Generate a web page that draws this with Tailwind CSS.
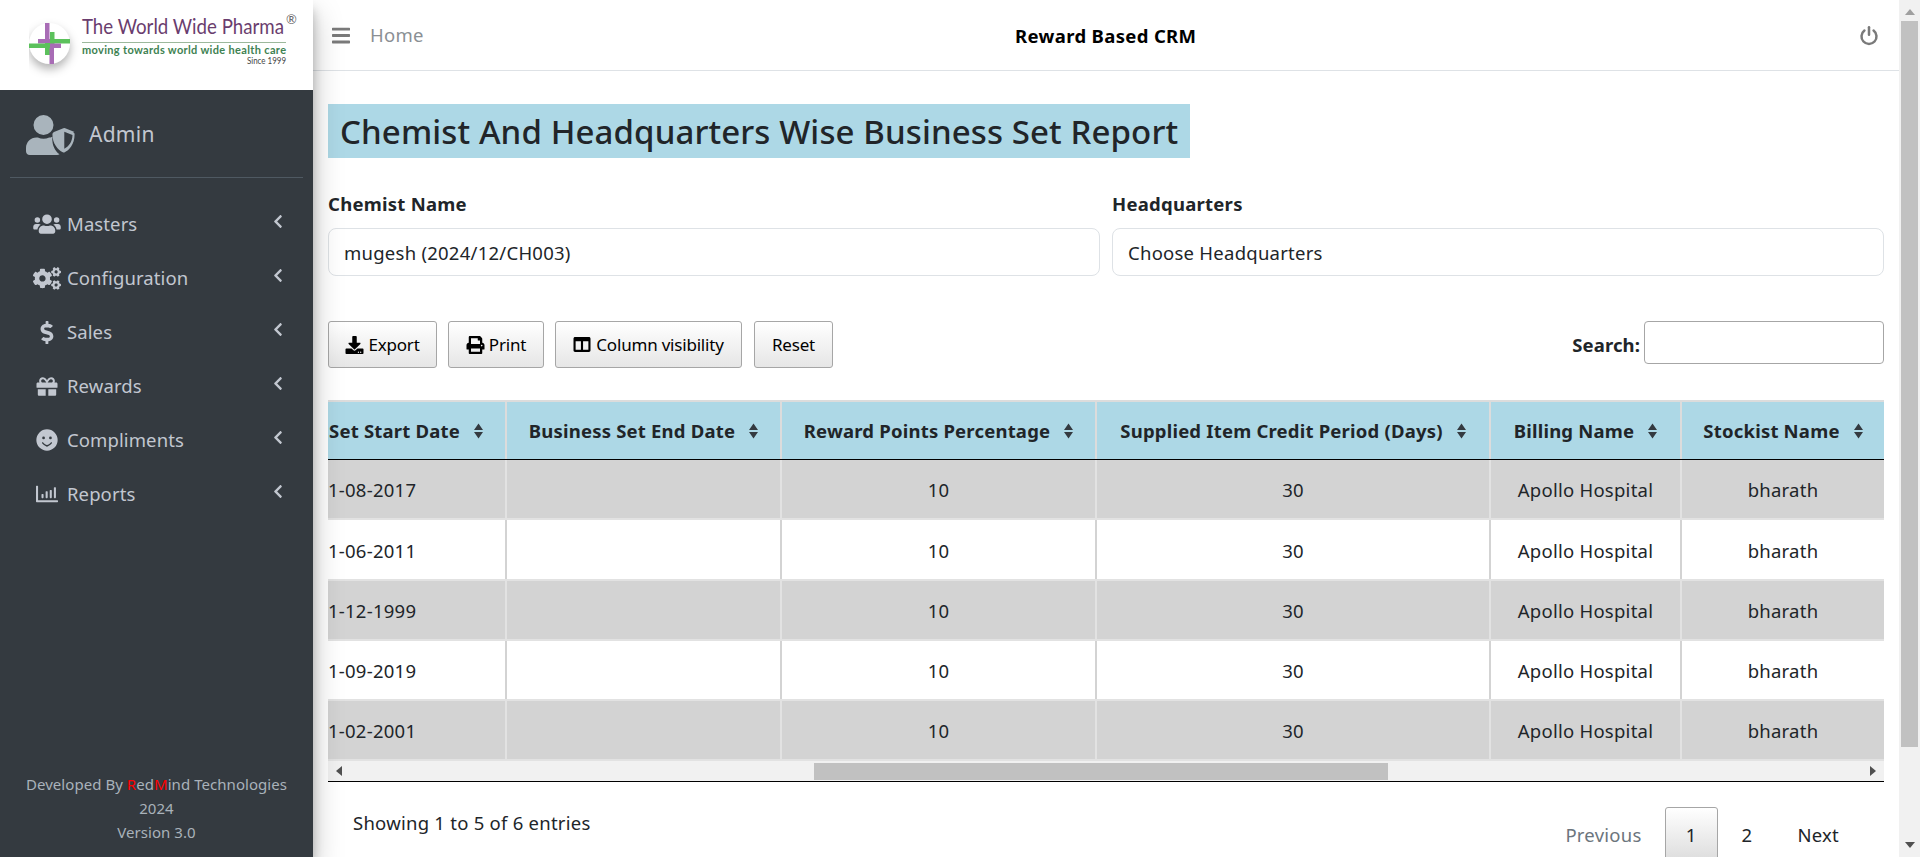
<!DOCTYPE html>
<html>
<head>
<meta charset="utf-8">
<script src="https://cdn.jsdelivr.net/npm/@tailwindcss/browser@4"></script>
</head>
<body class="m-0 overflow-hidden bg-white font-['Noto_Sans','Open_Sans',sans-serif] text-[#212529] tracking-[0.25px]">
<div class="flex h-[857px] w-[1920px] overflow-hidden">
  <aside class="relative z-10 flex h-full w-[313px] shrink-0 flex-col bg-[#343a40] shadow-[0_14px_28px_rgba(0,0,0,0.25),0_10px_10px_rgba(0,0,0,0.22)]">
    <div class="flex h-[90px] shrink-0 items-start bg-white pl-[29px] pt-[12px] tracking-normal">
      <svg width="275" height="66" viewBox="0 0 275 66">
        <circle cx="20.5" cy="31.5" r="20.5" fill="#fff" style="filter:drop-shadow(0 5px 5px rgba(0,0,0,.3))"/>
        <rect x="16" y="11" width="4.5" height="17" fill="#a86cb5"/>
        <rect x="9" y="27" width="12" height="4.5" fill="#a86cb5"/>
        <rect x="21" y="27" width="20" height="4.5" fill="#5cc15c"/>
        <rect x="21" y="20" width="4.5" height="16" fill="#5cc15c"/>
        <rect x="0" y="31.5" width="21" height="4.5" fill="#5cc15c"/>
        <rect x="16" y="31" width="5" height="12" fill="#5cc15c"/>
        <rect x="21" y="31.5" width="11" height="4.5" fill="#a86cb5"/>
        <rect x="20.5" y="36" width="4.5" height="16" fill="#a86cb5"/>
        <text x="53" y="22" font-family="Lato" font-size="22" fill="#6a3d6e" textLength="202" lengthAdjust="spacingAndGlyphs">The World Wide Pharma</text>
        <text x="257" y="12" font-family="Lato" font-size="13" fill="#666">®</text>
        <rect x="53" y="30" width="204" height="1" fill="#9cb89c"/>
        <text x="53" y="42" font-family="Lato" font-weight="700" font-size="11" fill="#3e8252" textLength="204" lengthAdjust="spacing">moving towards world wide health care</text>
        <text x="218" y="52" font-family="Lato" font-size="8.5" fill="#444" textLength="39" lengthAdjust="spacingAndGlyphs">Since 1999</text>
      </svg>
    </div>
    <div class="mx-[10px] flex h-[88px] shrink-0 items-center border-b border-[#4f5962] pl-[16px] pt-[2px]">
      <svg width="50" height="40" viewBox="0 0 640 512" class="text-[#a9b4bc]"><path fill="currentColor" d="M224 256a128 128 0 1 0 0-256 128 128 0 0 0 0 256zm90 32h-17a174 174 0 0 1-146 0h-17C60 288 0 348 0 422v42c0 27 21 48 48 48h352c11 0 20-3 29-9-62-42-93-115-93-208 0-6 0-12 1-17zM622 217l-120-48a32 32 0 0 0-24 0l-120 48a32 32 0 0 0-20 30c0 119 69 201 133 230 8 4 17 4 25 0 51-23 126-96 126-230 0-13-8-25-20-30zM490 432V215l105 42c-2 90-50 150-105 175z"/></svg>
      <span class="ml-[13px] text-[21px] text-[#c2c7d0]">Admin</span>
    </div>
    <nav class="flex flex-col pl-[32px] pr-[30px] pt-[19px] text-[18.5px] tracking-[0.1px] text-[#c2c7d0]">
      <div class="flex h-[54px] items-center"><span class="flex w-[30px] justify-center"><svg width="28" height="22" viewBox="0 0 640 512"><path fill="#c2c7d0" d="M96 224a64 64 0 1 0 0-128 64 64 0 0 0 0 128zm448 0a64 64 0 1 0 0-128 64 64 0 0 0 0 128zm32 32h-64c-18 0-34 7-45 19 40 22 69 62 75 109h66c18 0 32-14 32-32v-32c0-35-29-64-64-64zm-256 0a112 112 0 1 0 0-224 112 112 0 0 0 0 224zm77 32h-8a157 157 0 0 1-138 0h-8c-64 0-115 52-115 115v29c0 27 21 48 48 48h288c27 0 48-21 48-48v-29c0-63-52-115-115-115zm-224-13c-12-12-27-19-45-19H64c-35 0-64 29-64 64v32c0 18 14 32 32 32h66c6-47 35-87 75-109z"/></svg></span><span class="ml-[5px] flex-1">Masters</span><svg class="-mt-[5px]" width="10" height="15" viewBox="0 0 320 512"><path fill="#c2c7d0" d="M34 239L228 45c9-9 25-9 34 0l23 23c9 9 9 24 0 34L131 256l154 154c9 10 9 25 0 34l-23 23c-9 9-25 9-34 0L34 273c-9-9-9-25 0-34z"/></svg></div>
      <div class="flex h-[54px] items-center"><span class="flex w-[30px] justify-center"><svg width="28" height="23" viewBox="0 0 640 512"><path fill="#c2c7d0" d="M512.1 191l-8.2 14.3c-3 5.3-9.4 7.5-15.1 5.4-11.8-4.4-22.6-10.7-32.1-18.6-4.6-3.8-5.8-10.5-2.8-15.7l8.2-14.3c-6.9-8-12.3-17.3-15.9-27.4h-16.5c-6 0-11.2-4.3-12.2-10.3-2-12-2.1-24.6 0-37.1 1-6 6.2-10.4 12.2-10.4h16.5c3.6-10.1 9-19.4 15.9-27.4l-8.2-14.3c-3-5.2-1.9-11.9 2.8-15.7 9.5-7.9 20.4-14.2 32.1-18.6 5.7-2.1 12.1.1 15.1 5.4l8.2 14.3c10.5-1.9 21.2-1.9 31.7 0L552 6.3c3-5.3 9.4-7.5 15.1-5.4 11.8 4.4 22.6 10.7 32.1 18.6 4.6 3.8 5.8 10.5 2.8 15.7l-8.2 14.3c6.9 8 12.3 17.3 15.9 27.4h16.5c6 0 11.2 4.3 12.2 10.3 2 12 2.1 24.6 0 37.1-1 6-6.2 10.4-12.2 10.4h-16.5c-3.6 10.1-9 19.4-15.9 27.4l8.2 14.3c3 5.2 1.9 11.9-2.8 15.7-9.5 7.9-20.4 14.2-32.1 18.6-5.7 2.1-12.1-.1-15.1-5.4l-8.2-14.3c-10.4 1.9-21.2 1.9-31.7 0zm-10.5-58.8c38.5 29.6 82.4-14.3 52.8-52.8-38.5-29.7-82.4 14.3-52.8 52.8zM386.3 286.1l33.7 16.8c10.1 5.8 14.5 18.1 10.5 29.1-8.9 24.2-26.4 46.4-42.6 65.8-7.4 8.9-20.2 11.1-30.3 5.3l-29.1-16.8c-16 13.7-34.6 24.6-54.9 31.7v33.6c0 11.6-8.3 21.6-19.7 23.6-24.6 4.2-50.4 4.4-75.9 0-11.5-2-20-11.9-20-23.6V418c-20.3-7.2-38.9-18-54.9-31.7L74 403c-10 5.8-22.9 3.6-30.3-5.3-16.2-19.4-33.3-41.6-42.2-65.7-4-10.9.4-23.2 10.5-29.1l33.3-16.8c-3.9-20.9-3.9-42.4 0-63.4L12 205.8c-10.1-5.8-14.6-18.1-10.5-29 8.9-24.2 26-46.4 42.2-65.8 7.4-8.9 20.2-11.1 30.3-5.3l29.1 16.8c16-13.7 34.6-24.6 54.9-31.7V57.1c0-11.5 8.2-21.5 19.6-23.5 24.6-4.2 50.5-4.4 76-.1 11.5 2 20 11.9 20 23.6v33.6c20.3 7.2 38.9 18 54.9 31.7l29.1-16.8c10-5.8 22.9-3.6 30.3 5.3 16.2 19.4 33.2 41.6 42.1 65.8 4 10.9.1 23.2-10 29.1l-33.7 16.8c3.9 21 3.9 42.5 0 63.5zm-117.6 21.1c59.2-77-28.7-164.9-105.7-105.7-59.2 77 28.7 164.9 105.7 105.7zm243.4 182.7l-8.2 14.3c-3 5.3-9.4 7.5-15.1 5.4-11.8-4.4-22.6-10.7-32.1-18.6-4.6-3.8-5.8-10.5-2.8-15.7l8.2-14.3c-6.9-8-12.3-17.3-15.9-27.4h-16.5c-6 0-11.2-4.3-12.2-10.3-2-12-2.1-24.6 0-37.1 1-6 6.2-10.4 12.2-10.4h16.5c3.6-10.1 9-19.4 15.9-27.4l-8.2-14.3c-3-5.2-1.9-11.9 2.8-15.7 9.5-7.9 20.4-14.2 32.1-18.6 5.7-2.1 12.1.1 15.1 5.4l8.2 14.3c10.5-1.9 21.2-1.9 31.7 0l8.2-14.3c3-5.3 9.4-7.5 15.1-5.4 11.8 4.4 22.6 10.7 32.1 18.6 4.6 3.8 5.8 10.5 2.8 15.7l-8.2 14.3c6.9 8 12.3 17.3 15.9 27.4h16.5c6 0 11.2 4.3 12.2 10.3 2 12 2.1 24.6 0 37.1-1 6-6.2 10.4-12.2 10.4h-16.5c-3.6 10.1-9 19.4-15.9 27.4l8.2 14.3c3 5.2 1.9 11.9-2.8 15.7-9.5 7.9-20.4 14.2-32.1 18.6-5.7 2.1-12.1-.1-15.1-5.4l-8.2-14.3c-10.4 1.9-21.2 1.9-31.7 0zM501.6 431c38.5 29.6 82.4-14.3 52.8-52.8-38.5-29.6-82.4 14.3-52.8 52.8z"/></svg></span><span class="ml-[5px] flex-1">Configuration</span><svg class="-mt-[5px]" width="10" height="15" viewBox="0 0 320 512"><path fill="#c2c7d0" d="M34 239L228 45c9-9 25-9 34 0l23 23c9 9 9 24 0 34L131 256l154 154c9 10 9 25 0 34l-23 23c-9 9-25 9-34 0L34 273c-9-9-9-25 0-34z"/></svg></div>
      <div class="flex h-[54px] items-center"><span class="flex w-[30px] justify-center"><svg width="14" height="23" viewBox="0 0 288 512"><path fill="#c2c7d0" d="M209 233L101 202c-12-4-21-16-21-29 0-17 14-29 31-29h66c12 0 24 4 34 11 6 4 14 3 19-2l35-33c7-7 6-18-1-24-25-19-55-30-87-30V16c0-9-7-16-16-16h-32c-9 0-16 7-16 16v50h-3C47 66-4 122 1 187c4 46 39 84 83 97l102 30c12 4 21 16 21 29 0 17-14 29-31 29h-66c-12 0-24-4-34-11-6-4-14-3-19 2l-35 33c-7 7-6 18 1 24 25 19 55 30 87 30v50c0 9 7 16 16 16h32c9 0 16-7 16-16v-50c47-1 90-29 105-73 22-62-15-126-72-144z"/></svg></span><span class="ml-[5px] flex-1">Sales</span><svg class="-mt-[5px]" width="10" height="15" viewBox="0 0 320 512"><path fill="#c2c7d0" d="M34 239L228 45c9-9 25-9 34 0l23 23c9 9 9 24 0 34L131 256l154 154c9 10 9 25 0 34l-23 23c-9 9-25 9-34 0L34 273c-9-9-9-25 0-34z"/></svg></div>
      <div class="flex h-[54px] items-center"><span class="flex w-[30px] justify-center"><svg width="22" height="21" viewBox="0 0 512 512"><path fill="#c2c7d0" d="M32 448c0 18 14 32 32 32h160V320H32v128zm256 32h160c18 0 32-14 32-32V320H288v160zm192-320h-42c6-12 10-26 10-40 0-49-40-88-88-88-42 0-69 21-104 69-35-48-62-69-104-69-48 0-88 39-88 88 0 14 3 28 10 40H32c-18 0-32 14-32 32v80c0 9 7 16 16 16h480c9 0 16-7 16-16v-80c0-18-14-32-32-32zm-326 0c-22 0-40-18-40-40s18-40 40-40c20 0 35 3 87 80h-87zm204 0h-87c52-77 66-80 87-80 22 0 40 18 40 40s-18 40-40 40z"/></svg></span><span class="ml-[5px] flex-1">Rewards</span><svg class="-mt-[5px]" width="10" height="15" viewBox="0 0 320 512"><path fill="#c2c7d0" d="M34 239L228 45c9-9 25-9 34 0l23 23c9 9 9 24 0 34L131 256l154 154c9 10 9 25 0 34l-23 23c-9 9-25 9-34 0L34 273c-9-9-9-25 0-34z"/></svg></div>
      <div class="flex h-[54px] items-center"><span class="flex w-[30px] justify-center"><svg width="22" height="22" viewBox="0 0 496 512"><path fill="#c2c7d0" d="M248 8a248 248 0 1 0 0 496 248 248 0 0 0 0-496zm80 168a32 32 0 1 1 0 64 32 32 0 0 1 0-64zm-160 0a32 32 0 1 1 0 64 32 32 0 0 1 0-64zm194 154c-43 51-106 81-114 81s-71-30-114-81c-12-15 10-34 25-18 28 34 59 59 89 59s61-25 89-59c13-16 37 3 25 18z"/></svg></span><span class="ml-[5px] flex-1">Compliments</span><svg class="-mt-[5px]" width="10" height="15" viewBox="0 0 320 512"><path fill="#c2c7d0" d="M34 239L228 45c9-9 25-9 34 0l23 23c9 9 9 24 0 34L131 256l154 154c9 10 9 25 0 34l-23 23c-9 9-25 9-34 0L34 273c-9-9-9-25 0-34z"/></svg></div>
      <div class="flex h-[54px] items-center"><span class="flex w-[30px] justify-center"><svg width="22" height="22" viewBox="0 0 512 512"><path fill="#c2c7d0" d="M332 352h24c6 0 12-6 12-12V172c0-6-6-12-12-12h-24c-6 0-12 6-12 12v168c0 6 6 12 12 12zm96 0h24c6 0 12-6 12-12V108c0-6-6-12-12-12h-24c-6 0-12 6-12 12v232c0 6 6 12 12 12zm-288 0h24c6 0 12-6 12-12v-72c0-6-6-12-12-12h-24c-6 0-12 6-12 12v72c0 6 6 12 12 12zm96 0h24c6 0 12-6 12-12V204c0-6-6-12-12-12h-24c-6 0-12 6-12 12v136c0 6 6 12 12 12zm260 48H48V76c0-7-5-12-12-12H12C5 64 0 69 0 76v356c0 9 7 16 16 16h484c7 0 12-5 12-12v-24c0-7-5-12-12-12z"/></svg></span><span class="ml-[5px] flex-1">Reports</span><svg class="-mt-[5px]" width="10" height="15" viewBox="0 0 320 512"><path fill="#c2c7d0" d="M34 239L228 45c9-9 25-9 34 0l23 23c9 9 9 24 0 34L131 256l154 154c9 10 9 25 0 34l-23 23c-9 9-25 9-34 0L34 273c-9-9-9-25 0-34z"/></svg></div>
    </nav>
    <div class="mt-auto pb-[13px] text-center text-[15px] leading-[24px] tracking-[0.05px] text-[#a9b2ba]">
      <div>Developed By <span class="text-[#ff0000]">R</span>ed<span class="text-[#ff0000]">M</span>ind Technologies</div>
      <div>2024</div>
      <div>Version 3.0</div>
    </div>
  </aside>
  <div class="flex min-w-0 flex-1">
    <main class="flex min-w-0 flex-1 flex-col">
      <header class="flex h-[71px] shrink-0 items-center border-b border-[#dee2e6] pl-[19px] pr-[20px]">
        <svg width="18" height="21" viewBox="0 0 448 512" class="text-[#7a7a7a]"><path fill="currentColor" d="M16 132h416c9 0 16-7 16-16V76c0-9-7-16-16-16H16C7 60 0 67 0 76v40c0 9 7 16 16 16zm0 160h416c9 0 16-7 16-16v-40c0-9-7-16-16-16H16c-9 0-16 7-16 16v40c0 9 7 16 16 16zm0 160h416c9 0 16-7 16-16v-40c0-9-7-16-16-16H16c-9 0-16 7-16 16v40c0 9 7 16 16 16z"/></svg>
        <span class="ml-[20px] w-[645px] text-[18.5px] text-[#8a8f94]">Home</span>
        <span class="flex-1 pt-[2px] text-[18.5px] font-bold tracking-[0.35px] text-black">Reward Based CRM</span>
        <svg width="20" height="21" viewBox="0 0 24 24" fill="none" stroke="#7a7a7a" stroke-width="3" stroke-linecap="round"><path d="M12 2v9"/><path d="M6.5 6a9 9 0 1 0 11 0"/></svg>
      </header>
      <div class="flex min-h-0 flex-1 flex-col px-[15px]">
        <div class="flex pt-[33px]">
          <h1 class="bg-[#add8e6] px-[12px] pt-[2px] text-[33px] font-medium leading-[52px] tracking-[0.11px] text-[#212529]">Chemist And Headquarters Wise Business Set Report</h1>
        </div>
        <div class="mt-[32px] grid grid-cols-2 gap-x-[12px]">
          <div>
            <label class="block text-[18.5px] font-bold leading-[27px]">Chemist Name</label>
            <div class="mt-[11px] flex h-[48px] items-center rounded-[8px] border border-[#dee2e6] px-[15px] pt-[2px] text-[18.5px]">mugesh (2024/12/CH003)</div>
          </div>
          <div>
            <label class="block text-[18.5px] font-bold leading-[27px]">Headquarters</label>
            <div class="mt-[11px] flex h-[48px] items-center rounded-[8px] border border-[#dee2e6] px-[15px] pt-[2px] text-[18.5px]">Choose Headquarters</div>
          </div>
        </div>
        <div class="mt-[45px] flex h-[47px] items-center text-[17px] tracking-[-0.2px] text-black">
          <button class="flex h-[47px] w-[109px] items-center justify-center gap-[4px] rounded-[3px] border border-[#a6a6a6] bg-gradient-to-b from-white to-[#e6e6e6]"><svg width="19" height="18" viewBox="0 0 512 512"><path d="M216 0h80c13 0 24 11 24 24v168h88c18 0 27 21 14 34L270 378c-8 8-20 8-28 0L90 226c-13-13-4-34 14-34h88V24c0-13 11-24 24-24zm296 376v112c0 13-11 24-24 24H24c-13 0-24-11-24-24V376c0-13 11-24 24-24h147l49 49c20 20 52 20 72 0l49-49h147c13 0 24 11 24 24zm-124 88c0-11-9-20-20-20s-20 9-20 20 9 20 20 20 20-9 20-20zm64 0c0-11-9-20-20-20s-20 9-20 20 9 20 20 20 20-9 20-20z"/></svg>Export</button>
          <button class="ml-[11px] flex h-[47px] w-[96px] items-center justify-center gap-[4px] rounded-[3px] border border-[#a6a6a6] bg-gradient-to-b from-white to-[#e6e6e6]"><svg width="19" height="18" viewBox="0 0 512 512"><path d="M448 192V77c0-8-3-17-9-23L393 9c-6-6-14-9-23-9H96C78 0 64 14 64 32v160c-35 0-64 29-64 64v112c0 9 7 16 16 16h48v96c0 18 14 32 32 32h320c18 0 32-14 32-32v-96h48c9 0 16-7 16-16V256c0-35-29-64-64-64zm-64 256H128v-96h256v96zm0-224H128V64h192v48c0 9 7 16 16 16h48v96zm48 72c-13 0-24-11-24-24s11-24 24-24 24 11 24 24-11 24-24 24z"/></svg>Print</button>
          <button class="ml-[11px] flex h-[47px] w-[187px] items-center justify-center gap-[5px] rounded-[3px] border border-[#a6a6a6] bg-gradient-to-b from-white to-[#e6e6e6]"><svg width="18" height="17" viewBox="0 0 512 512"><path d="M464 32H48C21 32 0 53 0 80v352c0 27 21 48 48 48h416c27 0 48-21 48-48V80c0-27-21-48-48-48zM224 416H64V160h160v256zm224 0H288V160h160v256z"/></svg>Column visibility</button>
          <button class="ml-[12px] flex h-[47px] w-[79px] items-center justify-center rounded-[3px] border border-[#a6a6a6] bg-gradient-to-b from-white to-[#e6e6e6]">Reset</button>
          <span class="ml-auto text-[18.5px] font-bold tracking-[0.1px] text-[#212529]">Search:</span>
          <div class="ml-[4px] h-[43px] w-[240px] self-start rounded-[4px] border border-[#a6a6a6] bg-white"></div>
        </div>
        <div class="mt-[32px]">
          <div class="grid h-[60px] grid-cols-[179px_275px_315px_394px_191px_202px] border-t-2 border-b border-t-[#dcdcdc] border-b-black bg-[#add8e6] text-[18.5px] font-bold tracking-[0.2px]">
            <div class="flex items-center justify-end border-r-2 border-[#dcdcdc] pr-[22px]"><span class="whitespace-nowrap">Set Start Date</span><svg class="ml-[14px] shrink-0" width="9" height="16" viewBox="0 0 9 16"><path fill="#343a40" d="M4.5 0.5L9 7H0zM4.5 15.5L0 9h9z"/></svg></div>
            <div class="flex items-center justify-center border-r-2 border-[#dcdcdc]"><span class="whitespace-nowrap">Business Set End Date</span><svg class="ml-[14px] shrink-0" width="9" height="16" viewBox="0 0 9 16"><path fill="#343a40" d="M4.5 0.5L9 7H0zM4.5 15.5L0 9h9z"/></svg></div>
            <div class="flex items-center justify-center border-r-2 border-[#dcdcdc]"><span class="whitespace-nowrap">Reward Points Percentage</span><svg class="ml-[14px] shrink-0" width="9" height="16" viewBox="0 0 9 16"><path fill="#343a40" d="M4.5 0.5L9 7H0zM4.5 15.5L0 9h9z"/></svg></div>
            <div class="flex items-center justify-center border-r-2 border-[#dcdcdc]"><span class="whitespace-nowrap">Supplied Item Credit Period (Days)</span><svg class="ml-[14px] shrink-0" width="9" height="16" viewBox="0 0 9 16"><path fill="#343a40" d="M4.5 0.5L9 7H0zM4.5 15.5L0 9h9z"/></svg></div>
            <div class="flex items-center justify-center border-r-2 border-[#dcdcdc]"><span class="whitespace-nowrap">Billing Name</span><svg class="ml-[14px] shrink-0" width="9" height="16" viewBox="0 0 9 16"><path fill="#343a40" d="M4.5 0.5L9 7H0zM4.5 15.5L0 9h9z"/></svg></div>
            <div class="flex items-center justify-center"><span class="whitespace-nowrap">Stockist Name</span><svg class="ml-[14px] shrink-0" width="9" height="16" viewBox="0 0 9 16"><path fill="#343a40" d="M4.5 0.5L9 7H0zM4.5 15.5L0 9h9z"/></svg></div>
          </div>
          <div class="grid h-[60.25px] grid-cols-[179px_275px_315px_394px_191px_202px] items-stretch border-b-2 border-[#e2e2e2] bg-[#d3d3d3] text-center text-[18.5px]"><div class="flex items-center border-r-2 border-[#e2e2e2] pt-[2px]"><span>1-08-2017</span></div><div class="border-r-2 border-[#e2e2e2]"></div><div class="flex items-center justify-center border-r-2 border-[#e2e2e2] pt-[2px]">10</div><div class="flex items-center justify-center border-r-2 border-[#e2e2e2] pt-[2px]">30</div><div class="flex items-center justify-center border-r-2 border-[#e2e2e2] pt-[2px]">Apollo Hospital</div><div class="flex items-center justify-center pt-[2px]">bharath</div></div>
          <div class="grid h-[60.25px] grid-cols-[179px_275px_315px_394px_191px_202px] items-stretch border-b-2 border-[#e2e2e2] bg-white text-center text-[18.5px]"><div class="flex items-center border-r-2 border-[#d3d3d3] pt-[2px]"><span>1-06-2011</span></div><div class="border-r-2 border-[#d3d3d3]"></div><div class="flex items-center justify-center border-r-2 border-[#d3d3d3] pt-[2px]">10</div><div class="flex items-center justify-center border-r-2 border-[#d3d3d3] pt-[2px]">30</div><div class="flex items-center justify-center border-r-2 border-[#d3d3d3] pt-[2px]">Apollo Hospital</div><div class="flex items-center justify-center pt-[2px]">bharath</div></div>
          <div class="grid h-[60.25px] grid-cols-[179px_275px_315px_394px_191px_202px] items-stretch border-b-2 border-[#e2e2e2] bg-[#d3d3d3] text-center text-[18.5px]"><div class="flex items-center border-r-2 border-[#e2e2e2] pt-[2px]"><span>1-12-1999</span></div><div class="border-r-2 border-[#e2e2e2]"></div><div class="flex items-center justify-center border-r-2 border-[#e2e2e2] pt-[2px]">10</div><div class="flex items-center justify-center border-r-2 border-[#e2e2e2] pt-[2px]">30</div><div class="flex items-center justify-center border-r-2 border-[#e2e2e2] pt-[2px]">Apollo Hospital</div><div class="flex items-center justify-center pt-[2px]">bharath</div></div>
          <div class="grid h-[60.25px] grid-cols-[179px_275px_315px_394px_191px_202px] items-stretch border-b-2 border-[#e2e2e2] bg-white text-center text-[18.5px]"><div class="flex items-center border-r-2 border-[#d3d3d3] pt-[2px]"><span>1-09-2019</span></div><div class="border-r-2 border-[#d3d3d3]"></div><div class="flex items-center justify-center border-r-2 border-[#d3d3d3] pt-[2px]">10</div><div class="flex items-center justify-center border-r-2 border-[#d3d3d3] pt-[2px]">30</div><div class="flex items-center justify-center border-r-2 border-[#d3d3d3] pt-[2px]">Apollo Hospital</div><div class="flex items-center justify-center pt-[2px]">bharath</div></div>
          <div class="grid h-[60.25px] grid-cols-[179px_275px_315px_394px_191px_202px] items-stretch border-b-2 border-[#e2e2e2] bg-[#d3d3d3] text-center text-[18.5px]"><div class="flex items-center border-r-2 border-[#e2e2e2] pt-[2px]"><span>1-02-2001</span></div><div class="border-r-2 border-[#e2e2e2]"></div><div class="flex items-center justify-center border-r-2 border-[#e2e2e2] pt-[2px]">10</div><div class="flex items-center justify-center border-r-2 border-[#e2e2e2] pt-[2px]">30</div><div class="flex items-center justify-center border-r-2 border-[#e2e2e2] pt-[2px]">Apollo Hospital</div><div class="flex items-center justify-center pt-[2px]">bharath</div></div>
          <div class="flex h-[20.75px] items-center border-b border-black bg-[#f1f1f1]">
            <svg class="ml-[8px]" width="6" height="10" viewBox="0 0 6 10"><path fill="#505050" d="M6 0v10L0 5z"/></svg>
            <div class="ml-[472px] h-[17px] w-[574px] bg-[#c1c1c1]"></div>
            <svg class="ml-auto mr-[8px]" width="6" height="10" viewBox="0 0 6 10"><path fill="#505050" d="M0 0v10l6-5z"/></svg>
          </div>
        </div>
        <div class="flex items-start justify-between">
          <span class="ml-[25px] mt-[27px] text-[18.5px] leading-[27px]">Showing 1 to 5 of 6 entries</span>
          <div class="mr-[45px] mt-[25px] flex h-[56px] shrink-0 items-center text-[18.5px]">
            <span class="mr-[23px] text-[#6c757d]">Previous</span>
            <span class="flex h-[56px] w-[53px] items-center justify-center rounded-t-[3px] border border-[#a6a6a6] bg-gradient-to-b from-white to-[#dcdcdc]">1</span>
            <span class="ml-[24px] mr-[45px]">2</span>
            <span>Next</span>
          </div>
        </div>
      </div>
    </main>
    <div class="flex h-full w-[21px] shrink-0 flex-col items-center bg-[#f1f1f1]">
      <svg class="mt-[9px] shrink-0" width="10" height="6" viewBox="0 0 10 6"><path fill="#a0a0a0" d="M5 0l5 6H0z"/></svg>
      <div class="mt-[6px] h-[726px] w-[17px] shrink-0 bg-[#c1c1c1]"></div>
      <svg class="mb-[9px] mt-auto shrink-0" width="10" height="6" viewBox="0 0 10 6"><path fill="#505050" d="M5 6L0 0h10z"/></svg>
    </div>
  </div>
</div>
</body>
</html>
